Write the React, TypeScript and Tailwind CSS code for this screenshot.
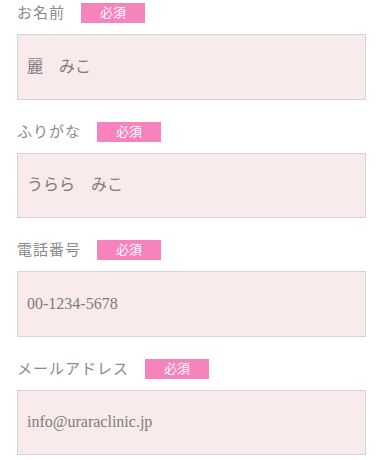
const fields = [
  { label: 'お名前', value: '麗　みこ' },
  { label: 'ふりがな', value: 'うらら　みこ' },
  { label: '電話番号', value: '00-1234-5678' },
  { label: 'メールアドレス', value: 'info@uraraclinic.jp' },
];

export default function App() {
  return (
    <div
      className="w-[380px] h-[460px] bg-white pt-[3px] pl-[17px] pr-[14px] overflow-hidden"
      style={{ fontFamily: '"Liberation Serif", "Noto Sans CJK JP", serif' }}
    >
      {fields.map((f) => (
        <div key={f.label} className="mb-[22px]">
          <div className="flex items-center h-[20px]">
            <span className="text-[15px] leading-[20px] tracking-[1px] text-[#8a8a8a]">{f.label}</span>
            <span className="ml-[16px] w-[64px] h-[20px] bg-[#f783bc] text-white text-[13px] leading-[20px] text-center">
              必須
            </span>
          </div>
          <div className="mt-[11px] h-[65.5px] border border-[#d2d4da] bg-[#f9eaeb] flex items-center pl-[9px] text-[16px] text-[#7d7d7d]">
            {f.value}
          </div>
        </div>
      ))}
    </div>
  );
}
